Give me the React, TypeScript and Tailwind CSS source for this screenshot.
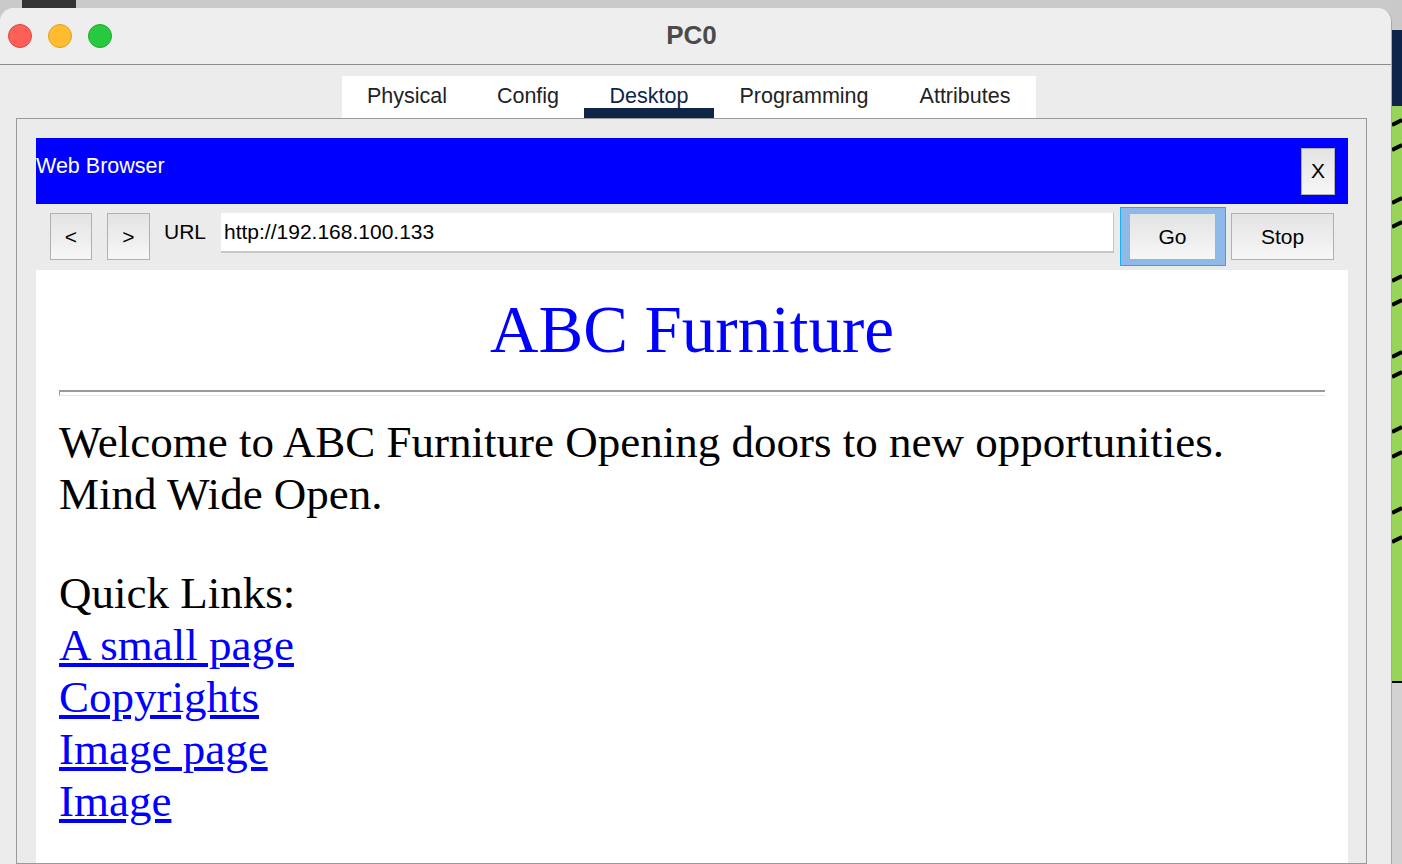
import React from 'react';

const sans = { fontFamily: '"Liberation Sans", Arial, sans-serif' };
const serif = { fontFamily: '"Liberation Serif", "Times New Roman", serif' };

const tabs = [
  { label: 'Physical', w: 'w-[130px]' },
  { label: 'Config', w: 'w-[112px]' },
  { label: 'Desktop', w: 'w-[130px]', active: true },
  { label: 'Programming', w: 'w-[180px]' },
  { label: 'Attributes', w: 'w-[142px]' },
];

const links = ['A small page', 'Copyrights', 'Image page', 'Image'];

const stripes = [14, 39, 92, 116, 170, 194, 246, 266, 321, 346, 402, 431];

const btn =
  'flex items-center justify-center border-[1.5px] border-[#b0b0b0] bg-linear-to-b from-[#e3e3e3] to-[#f7f7f7] text-[21px] text-black';

const App: React.FC = () => {
  return (
    <div className="w-[1402px] h-[864px] overflow-hidden flex bg-[#cacaca]" style={sans}>
      {/* Main window column */}
      <div className="w-[1392px] flex flex-col">
        {/* desktop strip above window */}
        <div className="h-[8px] shrink-0 flex">
          <div className="ml-[22px] w-[54px] h-full bg-[#333336]" />
        </div>

        <div className="flex-1 flex flex-col rounded-t-[14px] overflow-hidden bg-[#ececec] border-r border-[#a8a8a8]">
          {/* Title bar */}
          <div className="h-[57px] shrink-0 relative flex items-center bg-[#eeeeee] border-b border-[#8c8c8c]">
            <div className="flex items-center gap-[16px] pl-[8px]">
              <span className="w-[24px] h-[24px] rounded-full bg-[#fe5f57] border border-[#e0443e]" />
              <span className="w-[24px] h-[24px] rounded-full bg-[#febc2e] border border-[#dea123]" />
              <span className="w-[24px] h-[24px] rounded-full bg-[#28c840] border border-[#1aab29]" />
            </div>
            <div className="absolute inset-0 flex items-center justify-center pr-[8px] pb-[2px] pointer-events-none">
              <span className="text-[26px] font-bold text-[#4b4b4b]">PC0</span>
            </div>
          </div>

          {/* Tabs */}
          <div className="pt-[11px] pl-[342px] shrink-0">
            <div className="flex h-[42px] w-[694px] bg-white">
              {tabs.map((t) => (
                <div key={t.label} className={`${t.w} h-full flex flex-col items-center`}>
                  <span
                    className={`pt-[8px] leading-[24px] text-[21.5px] ${
                      t.active ? 'text-[#0f2548]' : 'text-[#222222]'
                    }`}
                  >
                    {t.label}
                  </span>
                  {t.active && <div className="mt-auto w-full h-[10px] bg-[#0f2548]" />}
                </div>
              ))}
            </div>
          </div>

          {/* Desktop panel */}
          <div className="ml-[16px] w-[1351px] flex-1 flex flex-col border border-[#9a9a9a] bg-[#ebebeb] pt-[19px] pl-[19px]">
            {/* Web Browser title bar */}
            <div className="w-[1312px] h-[66px] shrink-0 flex items-center justify-between bg-[#0000ff]">
              <span className="text-[21.5px] text-white -mt-[9px]">Web Browser</span>
              <div className={`${btn} mr-[13px] w-[34px] h-[47px]`}>X</div>
            </div>

            {/* Toolbar */}
            <div className="w-[1312px] h-[66px] shrink-0 flex items-start pt-[9px]">
              <div className={`${btn} ml-[14px] w-[42px] h-[47px]`}>&lt;</div>
              <div className={`${btn} ml-[15px] w-[43px] h-[47px]`}>&gt;</div>
              <span className="ml-[14px] w-[57px] text-[21px] leading-[40px] -mt-[1px] text-black">URL</span>
              <div className="w-[893px] h-[40px] flex items-center pl-[3px] bg-white border-b-2 border-r border-[#c6c6c6] text-[21px] text-black">
                http://192.168.100.133
              </div>
              <div className="ml-[6px] -mt-[6px] w-[106px] h-[59px] pl-[8px] pt-[5px] border border-[#14b2ee] bg-[#8fb9e9]">
                <div className={`${btn} w-[87px] h-[47px]`}>Go</div>
              </div>
              <div className={`${btn} ml-[5px] w-[103px] h-[47px]`}>Stop</div>
            </div>

            {/* Page content */}
            <div className="w-[1312px] flex-1 bg-white px-[23px]" style={serif}>
              <h1 className="mt-[20px] text-center text-[67px] leading-[78px] text-[#0000ff]">ABC Furniture</h1>
              <div className="mt-[22px] h-[6px] border-t-2 border-t-[#9a9a9a] border-l border-l-[#9a9a9a] border-b border-b-[#e6e6e6]" />
              <div className="mt-[20px] text-[45px] leading-[52px] text-black">
                <p>Welcome to ABC Furniture Opening doors to new opportunities.</p>
                <p>Mind Wide Open.</p>
                <p className="mt-[47px]">Quick Links:</p>
                {links.map((l) => (
                  <p key={l}>
                    <a href="#" className="text-[#0000ff] underline">
                      {l}
                    </a>
                  </p>
                ))}
              </div>
            </div>
          </div>
        </div>
      </div>

      {/* Desktop peeking on the right */}
      <div className="w-[10px] flex flex-col">
        <div className="h-[30px] shrink-0 bg-[#c9c9c9]" />
        <div className="h-[76px] shrink-0 bg-[#0e2549]" />
        <div className="h-[577px] shrink-0 bg-[#98d35a] border-b-2 border-black">
          <svg width="10" height="575" viewBox="0 0 10 575">
            {stripes.map((y) => (
              <line key={y} x1="0" y1={y + 5} x2="10" y2={y} stroke="#000" strokeWidth="4" />
            ))}
          </svg>
        </div>
        <div className="flex-1 bg-[#d2d2d2]" />
      </div>
    </div>
  );
};

export default App;
